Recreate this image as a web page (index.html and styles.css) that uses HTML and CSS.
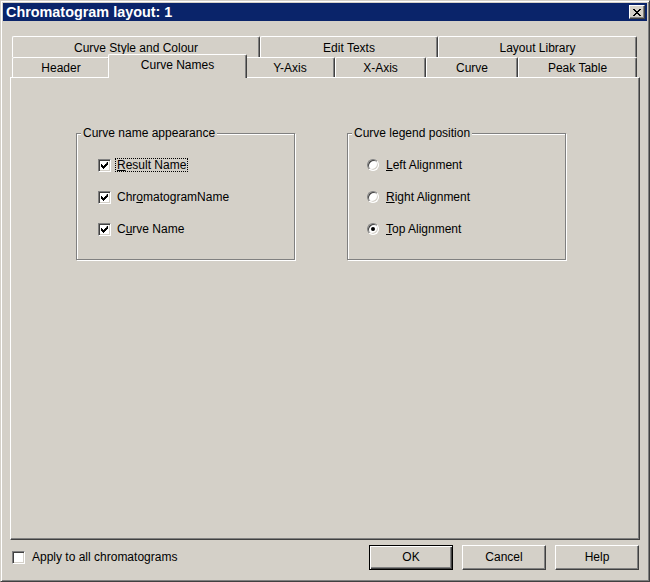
FILE: index.html
```html
<!DOCTYPE html>
<html>
<head>
<meta charset="utf-8">
<link rel="stylesheet" href="styles.css">
</head>
<body>
<div class="window">
  <div class="titlebar">
    <span class="title">Chromatogram layout: 1</span>
    <span class="close"><svg width="8" height="7" viewBox="0 0 8 7"><path d="M0 0h2v1h1v1h2v-1h1v-1h2v1h-1v1h-1v1h-1v1h1v1h1v1h1v1h-2v-1h-1v-1h-2v1h-1v1h-2v-1h1v-1h1v-1h1v-1h-1v-1h-1v-1h-1z" fill="#000"/></svg></span>
  </div>
  <div class="content">
    <div class="tabrow row1">
      <div class="tab w248">Curve Style and Colour</div>
      <div class="tab w178">Edit Texts</div>
      <div class="tab w199">Layout Library</div>
    </div>
    <div class="tabrow row2">
      <div class="tab w98">Header</div>
      <div class="tab sel w135">Curve Names</div>
      <div class="tab w90">Y-Axis</div>
      <div class="tab w91">X-Axis</div>
      <div class="tab w92">Curve</div>
      <div class="tab w119">Peak Table</div>
    </div>
    <div class="panel">
      <div class="group">
        <span class="legend">Curve name appearance</span>
        <div class="item"><span class="check"><svg width="7" height="7" viewBox="0 0 7 7"><path d="M6 0h1v3h-1v1h-1v1h-1v1h-1v1h-1v-1h-1v-1h-1v-3h1v1h1v1h1v-1h1v-1h1z" fill="#000"/></svg></span><span class="label focus"><u>R</u>esult Name</span></div>
        <div class="item"><span class="check"><svg width="7" height="7" viewBox="0 0 7 7"><path d="M6 0h1v3h-1v1h-1v1h-1v1h-1v1h-1v-1h-1v-1h-1v-3h1v1h1v1h1v-1h1v-1h1z" fill="#000"/></svg></span><span class="label">Chr<u>o</u>matogramName</span></div>
        <div class="item"><span class="check"><svg width="7" height="7" viewBox="0 0 7 7"><path d="M6 0h1v3h-1v1h-1v1h-1v1h-1v1h-1v-1h-1v-1h-1v-3h1v1h1v1h1v-1h1v-1h1z" fill="#000"/></svg></span><span class="label">C<u>u</u>rve Name</span></div>
      </div>
      <div class="group">
        <span class="legend">Curve legend position</span>
        <div class="item"><span class="radio"></span><span class="label"><u>L</u>eft Alignment</span></div>
        <div class="item"><span class="radio"></span><span class="label"><u>R</u>ight Alignment</span></div>
        <div class="item"><span class="radio on"><span class="dot"></span></span><span class="label"><u>T</u>op Alignment</span></div>
      </div>
    </div>
    <div class="bottom">
      <div class="apply"><span class="check"></span><span class="label">Apply to all chromatograms</span></div>
      <div class="buttons">
        <div class="btn default"><span>OK</span></div>
        <div class="btn"><span>Cancel</span></div>
        <div class="btn"><span>Help</span></div>
      </div>
    </div>
  </div>
</div>
</body>
</html>
```
FILE: styles.css
```css
html, body {
  margin: 0;
  padding: 0;
  background: #d4d0c8;
}
body {
  width: 650px;
  height: 582px;
  overflow: hidden;
  font-family: "Liberation Sans", Arial, sans-serif;
  font-size: 12px;
  color: #000;
}
.window {
  box-sizing: border-box;
  width: 650px;
  height: 582px;
  border: 1px solid;
  border-color: #d4d0c8 #404040 #404040 #d4d0c8;
  box-shadow: inset 1px 1px #fff, inset -1px -1px #808080;
  padding: 2px;
  display: flex;
  flex-direction: column;
}
.titlebar {
  height: 18px;
  background: #0a246a;
  display: flex;
  align-items: center;
  justify-content: space-between;
  padding: 0 2px 0 3px;
}
.title {
  color: #fff;
  font-weight: bold;
  font-size: 14.4px;
}
.close {
  box-sizing: border-box;
  width: 16px;
  height: 14px;
  background: #d4d0c8;
  border: 1px solid;
  border-color: #fff #404040 #404040 #fff;
  box-shadow: inset -1px -1px #808080;
  display: flex;
  align-items: center;
  justify-content: center;
  padding-right: 1px;
}
.content {
  padding: 15px 7px 0 7px;
  display: flex;
  flex-direction: column;
}
.tabrow {
  display: flex;
  margin-left: 2px;
}
.row1 { height: 21px; }
.row2 { height: 20px; }
.tab {
  box-sizing: border-box;
  height: 100%;
  border-top: 1px solid #fff;
  border-left: 1px solid #fff;
  border-right: 1px solid #404040;
  border-radius: 2px 2px 0 0;
  box-shadow: inset -1px 0 #808080;
  display: flex;
  align-items: center;
  justify-content: center;
  padding-top: 1px;
  background: #d4d0c8;
}
.row2 .tab { padding-top: 0; }
.tab.sel {
  position: relative;
  z-index: 1;
  height: 24px;
  margin: -3px -2px -1px -2px;
  width: 139px;
  align-items: flex-start;
  padding-top: 3px;
}
.w248 { width: 248px; }
.w178 { width: 178px; }
.w199 { width: 199px; }
.w98 { width: 98px; }
.w135 { width: 135px; }
.w90 { width: 90px; }
.w91 { width: 91px; }
.w92 { width: 92px; }
.w119 { width: 119px; }
.panel {
  box-sizing: border-box;
  width: 630px;
  height: 463px;
  border: 1px solid;
  border-color: #fff #404040 #404040 #fff;
  box-shadow: inset -1px -1px #808080;
  padding: 55px 0 0 65px;
  display: flex;
  gap: 52px;
  align-items: flex-start;
}
.group {
  position: relative;
  box-sizing: border-box;
  width: 219px;
  height: 127px;
  border: 1px solid #808080;
  box-shadow: inset 1px 1px #fff, 1px 1px #fff;
  padding: 24px 0 0 21px;
  display: flex;
  flex-direction: column;
  gap: 18px;
}
.legend {
  position: absolute;
  top: -8px;
  left: 4px;
  padding: 0 2px;
  background: #d4d0c8;
  line-height: 14px;
}
.item {
  display: flex;
  align-items: center;
  height: 14px;
}
.check {
  box-sizing: border-box;
  width: 13px;
  height: 13px;
  background: #fff;
  border: 1px solid;
  border-color: #808080 #fff #fff #808080;
  box-shadow: inset 1px 1px #404040, inset -1px -1px #d4d0c8;
  display: flex;
  align-items: center;
  justify-content: center;
  flex: none;
}
.item .label {
  margin-left: 4px;
  padding: 0 1px;
  border: 1px solid transparent;
  line-height: 12px;
}
.label.focus {
  border: 1px dotted #000;
}
.radio {
  box-sizing: border-box;
  width: 12px;
  height: 12px;
  border-radius: 50%;
  background: #fff;
  border: 1px solid;
  border-color: #808080 #fff #fff #808080;
  box-shadow: inset 1px 1px #404040, inset -1px -1px #d4d0c8;
  display: flex;
  align-items: center;
  justify-content: center;
  flex: none;
  margin-left: -2px;
}
.group .item .radio + .label { margin-left: 5px; }
.dot {
  width: 4px;
  height: 4px;
  border-radius: 50%;
  background: #000;
}
.bottom {
  display: flex;
  justify-content: space-between;
  align-items: center;
  margin-top: 4px;
  height: 26px;
}
.apply {
  display: flex;
  align-items: center;
  margin-left: 2px;
}
.apply .label {
  margin-left: 7px;
}
.buttons {
  display: flex;
  gap: 9px;
  margin-right: 1px;
}
.btn {
  box-sizing: border-box;
  width: 84px;
  height: 25px;
  border: 1px solid;
  border-color: #fff #404040 #404040 #fff;
  box-shadow: inset -1px -1px #808080;
  display: flex;
  align-items: center;
  justify-content: center;
}
.btn.default {
  border: 1px solid #000;
  box-shadow: inset 1px 1px #fff, inset -1px -1px #404040, inset -2px -2px #808080;
}
```
